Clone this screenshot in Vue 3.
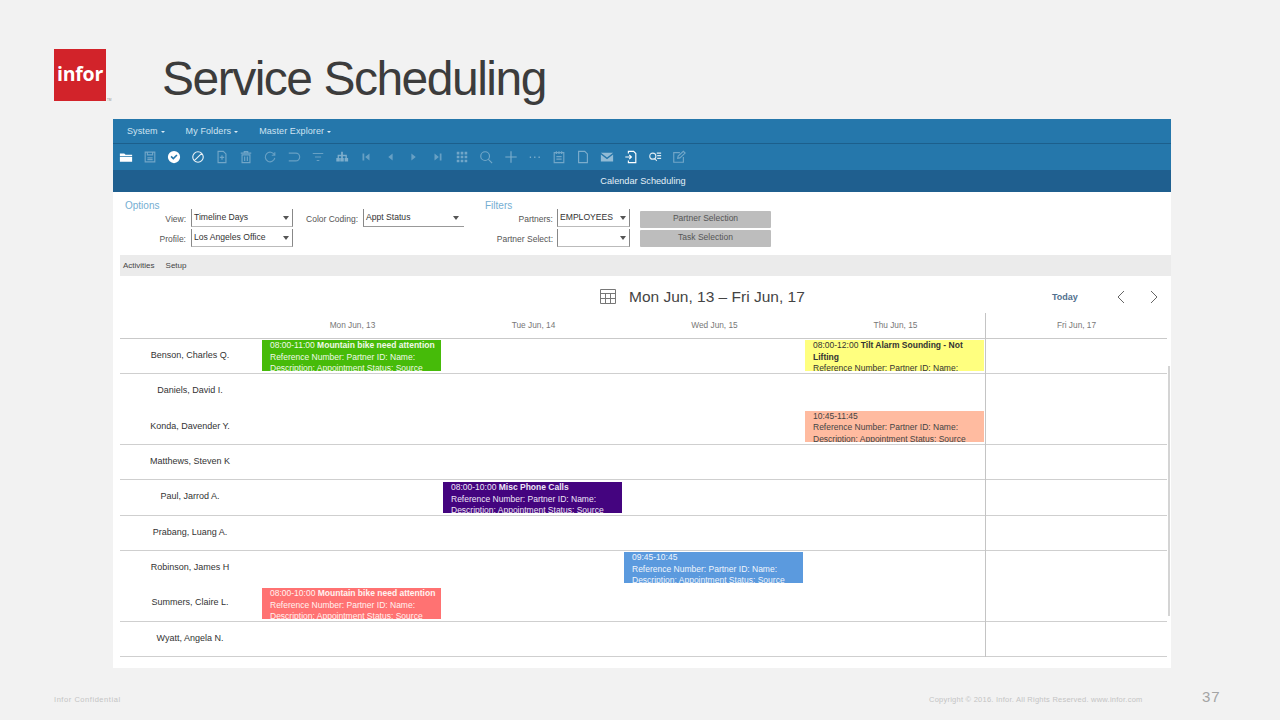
<script setup>
const menus = ['System', 'My Folders', 'Master Explorer']

const icons = [
  { f: 'M1 4h5l1.500 1.500H15V7H1zM1 8h14v5.500H1z', o: 1 },
  { s: 'M2.500 2.500h11v11h-11zM5 2.500v3h6v-3M5 9h6M5 11h6', o: 0.35 },
  { f: 'M8 1a7 7 0 1 0 0 14A7 7 0 0 0 8 1zm-.800 10.200L4 8l1.300-1.300 1.900 1.900 3.500-3.500L12 6.400z', o: 1 },
  { s: 'M8 2a6 6 0 1 0 0 12A6 6 0 0 0 8 2zM3.800 12.200l8.400-8.400', o: 0.9 },
  { s: 'M3.500 1.500h6l3 3v10h-9zM8 6v5M5.500 8.500h5', o: 0.35 },
  { s: 'M2 3.500h12M6 3.500V1.800h4v1.700M3.500 5.500h9v9h-9zM6.500 7.500v5M9.500 7.500v5', o: 0.35 },
  { s: 'M13 5.500A5.500 5.500 0 1 0 13.500 9M13.500 2.500v3.500H10', o: 0.3 },
  { s: 'M2 3.500h8a4.500 4.500 0 0 1 0 9H2', o: 0.3 },
  { s: 'M2 4h12M4.500 8h7M6.500 12h3', o: 0.3 },
  { f: 'M7 2h2v3.500h4.500V9h1.500v4h-4V9h1V7H9v2h1v4H6V9h1V7H4.500v2h1v4h-4V9H3V5.500h4z', o: 0.4 },
  { f: 'M4 4h2v8H4zM12 4v8L7 8z', o: 0.3 },
  { f: 'M11 4v8L6 8z', o: 0.3 },
  { f: 'M5 4v8l5-4z', o: 0.3 },
  { f: 'M10 4h2v8h-2zM4 4v8l5-4z', o: 0.3 },
  { f: 'M2 2h3v3H2zM6.500 2h3v3h-3zM11 2h3v3h-3zM2 6.500h3v3H2zM6.500 6.500h3v3h-3zM11 6.500h3v3h-3zM2 11h3v3H2zM6.500 11h3v3h-3zM11 11h3v3h-3z', o: 0.35 },
  { s: 'M7 2a5 5 0 1 0 0 10A5 5 0 0 0 7 2zM10.500 10.500L15 15', o: 0.35 },
  { s: 'M8 1.500v13M1.500 8h13', o: 0.4 },
  { f: 'M2 7.500h1.500V9H2zM7 7.500h1.500V9H7zM12 7.500h1.500V9H12z', o: 0.4 },
  { s: 'M2.500 3h11v11.500h-11zM5 1.500v3M8 1.500v3M11 1.500v3M5 7.500h6M5 10.500h6', o: 0.35 },
  { s: 'M3 1.500h7l3 3v10H3z', o: 0.4 },
  { f: 'M1 3h14L8 8.500zM1 5l7 5.500L15 5v8H1z', o: 0.5 },
  { s: 'M5 4V1.500h6l2.500 2.500v10.500H5V12M1.500 8h6.500M6 5.500L8.500 8 6 10.500', o: 1 },
  { s: 'M5.500 3.500a3.500 3.500 0 1 0 0 7 3.500 3.500 0 0 0 0-7zM8 10l2 2.500M10 3.500h5M10.500 6.500h4.500M10.500 9.500h4.500', o: 0.85 },
  { s: 'M13 8v6H2V3h7M6.500 9.500l.5-2.500 6-5.500 2 2-6 5.500z', o: 0.35 }
]

const days = ['Mon Jun, 13', 'Tue Jun, 14', 'Wed Jun, 15', 'Thu Jun, 15', 'Fri Jun, 17']

const rows = [
  { name: 'Benson, Charles Q.', line: true, day: 0, color: 'green', top: 1, time: '08:00-11:00', title: 'Mountain bike need attention', body: ['Reference Number: Partner ID: Name:', 'Description: Appointment Status: Source'], extra: { day: 3, color: 'yellow', top: 1, time: '08:00-12:00', title: 'Tilt Alarm Sounding - Not Lifting', body: ['Reference Number: Partner ID: Name:'] } },
  { name: 'Daniels, David I.', line: false },
  { name: 'Konda, Davender Y.', line: true, day: 3, color: 'salmon', top: 1, time: '10:45-11:45', title: '', body: ['Reference Number: Partner ID: Name:', 'Description: Appointment Status: Source'] },
  { name: 'Matthews, Steven K', line: true },
  { name: 'Paul, Jarrod A.', line: true, day: 1, color: 'purple', top: 2, time: '08:00-10:00', title: 'Misc Phone Calls', body: ['Reference Number: Partner ID: Name:', 'Description: Appointment Status: Source'] },
  { name: 'Prabang, Luang A.', line: true },
  { name: 'Robinson, James H', line: false, day: 2, color: 'blue', top: 1, time: '09:45-10:45', title: '', body: ['Reference Number: Partner ID: Name:', 'Description: Appointment Status: Source'] },
  { name: 'Summers, Claire L.', line: true, day: 0, color: 'red', top: 2, time: '08:00-10:00', title: 'Mountain bike need attention', body: ['Reference Number: Partner ID: Name:', 'Description: Appointment Status: Source'] },
  { name: 'Wyatt, Angela N.', line: true }
]

const eventFor = (row, d) => {
  if (row.day === d) return row
  if (row.extra && row.extra.day === d) return row.extra
  return null
}
</script>

<template>
  <div class="slide">
    <header class="head">
      <div class="logo">infor<span class="tm">TM</span></div>
      <h1>Service Scheduling</h1>
    </header>

    <main class="panel">
      <nav class="menubar">
        <span v-for="m in menus" :key="m" class="menu">{{ m }}<i class="caret"></i></span>
      </nav>
      <div class="toolbar">
        <svg v-for="(ic, i) in icons" :key="i" class="tool" viewBox="0 0 16 16" :style="{ opacity: ic.o }">
          <path v-if="ic.f" :d="ic.f" fill="#fff" />
          <path v-if="ic.s" :d="ic.s" fill="none" stroke="#fff" stroke-width="1.300" />
        </svg>
      </div>
      <div class="titlebar">Calendar Scheduling</div>

      <section class="form">
        <div class="options">
          <div class="legend">Options</div>
          <div class="opt-grid">
            <label>View:</label>
            <div class="sel boxed">Timeline Days<i class="drop"></i></div>
            <label>Color Coding:</label>
            <div class="sel under">Appt Status<i class="drop"></i></div>
            <label>Profile:</label>
            <div class="sel boxed">Los Angeles Office<i class="drop"></i></div>
          </div>
        </div>
        <div class="filters">
          <div class="legend">Filters</div>
          <div class="fil-grid">
            <label>Partners:</label>
            <div class="sel boxed tight">EMPLOYEES<i class="drop"></i></div>
            <button class="btn">Partner Selection</button>
            <label>Partner Select:</label>
            <div class="sel boxed tight"><i class="drop"></i></div>
            <button class="btn second">Task Selection</button>
          </div>
        </div>
      </section>

      <div class="tabs"><span>Activities</span><span>Setup</span></div>

      <section class="calendar">
        <div class="cal-top">
          <svg class="cal-icon" viewBox="0 0 16 15">
            <path d="M.5.5h15v14H.5zM.5 4.500h15M5.500 4.500v10M10.500 4.500v10M.5 9.500h15" fill="none" stroke="#777" stroke-width="1" />
          </svg>
          <span class="range">Mon Jun, 13 – Fri Jun, 17</span>
          <span class="today">Today</span>
          <svg class="chev first" viewBox="0 0 10 14"><path d="M8 1L2 7l6 6" fill="none" stroke="#666" stroke-width="1" /></svg>
          <svg class="chev" viewBox="0 0 10 14"><path d="M2 1l6 6-6 6" fill="none" stroke="#666" stroke-width="1" /></svg>
        </div>

        <div class="grid-row day-row">
          <div class="name"></div>
          <div v-for="d in days" :key="d" class="day">{{ d }}</div>
        </div>

        <div v-for="row in rows" :key="row.name" class="grid-row person" :class="{ noline: !row.line }">
          <div class="name">{{ row.name }}</div>
          <div v-for="(d, i) in days" :key="d" class="cell">
            <div v-if="eventFor(row, i)" class="event" :class="eventFor(row, i).color" :style="{ marginTop: eventFor(row, i).top + 'px' }">
              <div class="ev-head">{{ eventFor(row, i).time }} <b>{{ eventFor(row, i).title }}</b></div>
              <div v-for="t in eventFor(row, i).body" :key="t">{{ t }}</div>
            </div>
          </div>
        </div>

        <div class="vline"></div>
        <div class="scroll"></div>
      </section>
    </main>

    <footer class="foot">
      <span class="conf">Infor Confidential</span>
      <span class="copy">Copyright © 2016. Infor. All Rights Reserved. www.infor.com</span>
      <span class="page">37</span>
    </footer>
  </div>
</template>

<style scoped>
.slide {
  width: 1280px;
  height: 720px;
  background: #f2f2f2;
  font-family: "Liberation Sans", Arial, sans-serif;
  overflow: hidden;
  position: relative;
}
.head {
  height: 119px;
  display: flex;
  align-items: flex-start;
  padding-left: 54px;
  box-sizing: border-box;
}
.logo {
  position: relative;
  width: 52px;
  height: 52px;
  margin-top: 49px;
  background: #d2232a;
  color: #fff;
  font-family: "Open Sans", sans-serif;
  font-weight: 700;
  font-size: 19.500px;
  line-height: 49px;
  text-align: center;
  letter-spacing: -0.2px;
}
.tm {
  position: absolute;
  left: 53px;
  bottom: -1px;
  font-size: 3px;
  line-height: 4px;
  color: #888;
  font-weight: 400;
  letter-spacing: 0;
}
h1 {
  margin: 50px 0 0 56px;
  font-weight: 400;
  font-size: 48px;
  line-height: 58px;
  color: #3c3c3c;
  letter-spacing: -1.500px;
}
.panel {
  margin-left: 113px;
  width: 1058px;
  height: 549px;
  background: #fff;
  display: flex;
  flex-direction: column;
}
.menubar {
  height: 24px;
  background: #2577ab;
  border-bottom: 1px solid #1c5f8c;
  display: flex;
  align-items: center;
  padding-left: 14px;
  gap: 21px;
  font-size: 9px;
  color: #cfe4f2;
}
.menu {
  display: inline-flex;
  align-items: center;
  letter-spacing: 0.1px;
}
.caret {
  display: inline-block;
  margin-left: 3px;
  margin-top: 2px;
  border-left: 2px solid transparent;
  border-right: 2px solid transparent;
  border-top: 2px solid #dcebf5;
}
.toolbar {
  height: 26px;
  background: #2577ab;
  display: flex;
  align-items: center;
  padding-left: 6px;
  gap: 10.040px;
}
.tool {
  width: 14px;
  height: 14px;
  flex: none;
}
.titlebar {
  height: 22px;
  background: #1f5f8f;
  color: #e3f0f8;
  font-size: 9.200px;
  line-height: 22px;
  text-align: center;
  padding-left: 2px;
}
.form {
  height: 63px;
  display: flex;
  padding: 8px 0 0 12px;
  box-sizing: border-box;
}
.options { width: 360px; }
.legend {
  height: 9px;
  font-size: 10px;
  line-height: 12px;
  color: #74aed2;
}
.opt-grid {
  display: grid;
  grid-template-columns: 66px 102px 70px 101px;
  grid-auto-rows: 18px;
  row-gap: 2px;
}
.fil-grid {
  display: grid;
  grid-template-columns: 68px 77px 141px;
  grid-auto-rows: 18px;
  row-gap: 2px;
}
label {
  font-size: 8.500px;
  line-height: 20px;
  text-align: right;
  color: #555;
  padding-right: 5px;
  white-space: nowrap;
  box-sizing: border-box;
}
.fil-grid label { padding-right: 0; }
.sel {
  position: relative;
  font-size: 8.600px;
  line-height: 17px;
  color: #333;
  padding-left: 2px;
  box-sizing: border-box;
  white-space: nowrap;
}
.boxed {
  border-left: 1px solid #888;
  border-right: 1px solid #888;
  border-bottom: 1px solid #bbb;
}
.under {
  border-left: 1px solid #888;
  border-bottom: 1px solid #999;
}
.tight {
  margin-left: 4px;
  padding-left: 2px;
}
.drop {
  position: absolute;
  right: 3px;
  top: 7px;
  border-left: 3.500px solid transparent;
  border-right: 3.500px solid transparent;
  border-top: 4px solid #555;
}
.under .drop { right: 5px; }
.btn {
  width: 131px;
  margin: 2px 0 0 10px;
  height: 17px;
  padding: 0 0 3px;
  border: 0;
  border-radius: 1px;
  background: #bdbdbd;
  color: #555;
  font-family: inherit;
  font-size: 8.500px;
}
.btn.second { margin-top: 1px; }
.tabs {
  margin-left: 7px;
  height: 21px;
  background: #ebebeb;
  display: flex;
  align-items: center;
  padding-left: 3px;
  gap: 11px;
  font-size: 8px;
  color: #444;
}
.calendar {
  position: relative;
  flex: 1;
  margin-left: 7px;
}
.cal-top {
  height: 33px;
  padding: 4px 0 0 480px;
  display: flex;
  align-items: center;
}
.cal-icon {
  width: 16px;
  height: 15px;
  flex: none;
}
.range {
  margin-left: 13px;
  width: 423px;
  font-size: 15.500px;
  color: #444;
  white-space: nowrap;
}
.today {
  width: 64px;
  font-size: 9px;
  font-weight: 700;
  color: #50708e;
}
.chev {
  width: 10px;
  height: 14px;
  flex: none;
}
.chev.first { margin-right: 23px; }
.grid-row {
  display: grid;
  grid-template-columns: 142px 181px 181px 181px 181px 181px;
  width: 1047px;
}
.day-row {
  height: 26px;
  border-bottom: 1px solid #c9c9c9;
  box-sizing: border-box;
}
.day {
  font-size: 8.300px;
  line-height: 24px;
  text-align: center;
  color: #777;
}
.person {
  height: 35.350px;
  border-bottom: 1px solid #cfcfcf;
  box-sizing: border-box;
}
.person.noline { border-bottom-color: transparent; }
.name {
  font-size: 9px;
  line-height: 33px;
  text-align: center;
  color: #333;
  padding-right: 2px;
  white-space: nowrap;
}
.cell {
  min-width: 0;
  overflow: hidden;
}
.event {
  width: 179px;
  height: 31px;
  padding: 0 2px 0 8px;
  box-sizing: border-box;
  overflow: hidden;
  font-size: 8.500px;
  line-height: 11.500px;
}
.green { background: #46bb09; color: #f0f9e8; }
.yellow { background: #ffff7f; color: #333; }
.salmon { background: #ffbba0; color: #444; }
.purple { background: #44047f; color: #eee6f6; }
.blue { background: #5b9ade; color: #f0f5fc; }
.red { background: #ff7272; color: #fff2f0; }
.vline {
  position: absolute;
  left: 865px;
  top: 37px;
  width: 1px;
  height: 344px;
  background: #c4c4c4;
}
.scroll {
  position: absolute;
  right: 1px;
  top: 90px;
  width: 2px;
  height: 250px;
  background: #d4d4d4;
}
.foot {
  height: 52px;
  display: flex;
  align-items: center;
  padding: 10px 0 0 54px;
  box-sizing: border-box;
  font-size: 7.500px;
  letter-spacing: 0.550px;
  color: #c4c4c4;
}
.conf { width: 875px; }
.copy { width: 273px; white-space: nowrap; letter-spacing: 0.240px; }
.page {
  font-size: 15px;
  letter-spacing: 1px;
  color: #a4a4a4;
  margin-top: -5px;
}
</style>
